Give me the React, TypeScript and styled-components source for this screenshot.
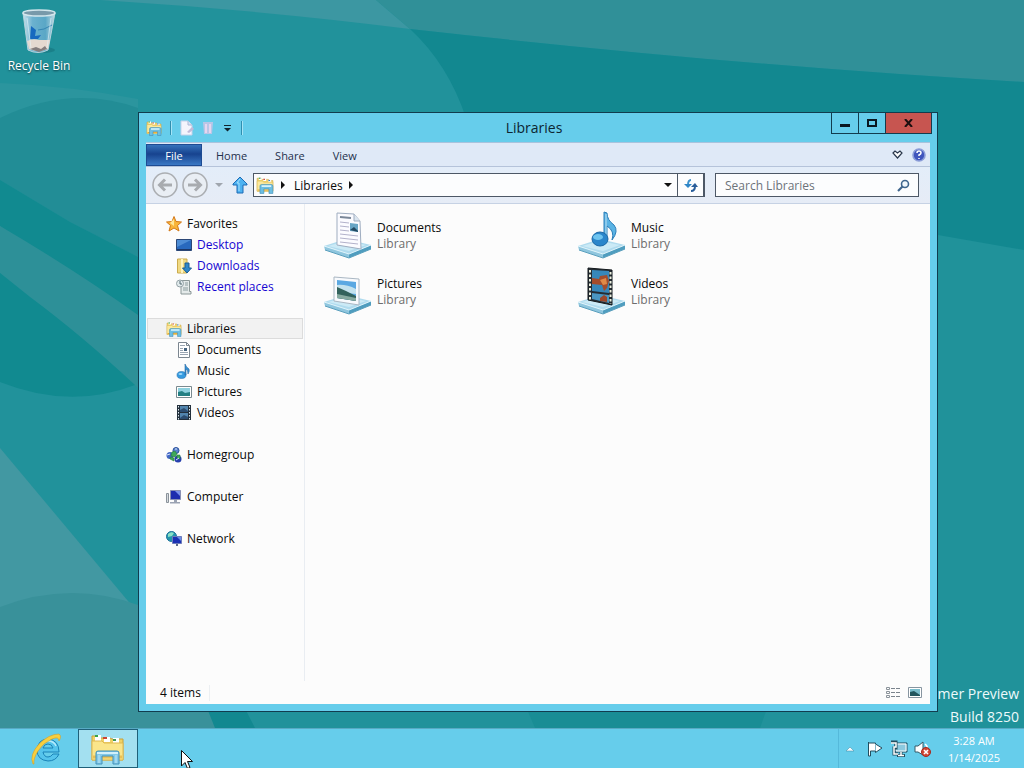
import { ReactNode, useState } from "react";
import styled, { createGlobalStyle } from "styled-components";

const GlobalStyle = createGlobalStyle`
  * {
    box-sizing: border-box;
  }
  body {
    margin: 0;
    font-family: "Segoe UI", "Open Sans", "Noto Sans", sans-serif;
    font-size: 12px;
    color: #0a0a0a;
  }
  button, input {
    font: inherit;
    color: inherit;
    padding: 0;
    border: none;
    background: none;
  }
  h1, p, ul {
    margin: 0;
    padding: 0;
  }
  svg {
    display: block;
    flex: none;
  }
`;

const Screen = styled.div`
  display: flex;
  flex-direction: column;
  min-height: 100vh;
  overflow: hidden;
`;

const Desktop = styled.main`
  position: relative;
  flex: 1;
  background: #21929b;
`;

const WallpaperSvg = styled.svg`
  position: absolute;
  inset: 0;
  width: 100%;
  height: 100%;
`;

const DesktopIcon = styled.button`
  position: absolute;
  top: 8px;
  left: 0;
  width: 78px;
  display: flex;
  flex-direction: column;
  align-items: center;
  gap: 2px;
  color: #fff;
  line-height: 16px;
  text-shadow: 0 1px 2px rgba(0, 40, 50, 0.8);
`;

const Watermark = styled.p`
  position: absolute;
  right: 5px;
  bottom: 0;
  color: #eefafc;
  font-size: 14px;
  line-height: 23px;
  text-align: right;
`;

const Window = styled.section`
  position: absolute;
  top: 112px;
  right: 86px;
  bottom: 16px;
  left: 138px;
  display: flex;
  flex-direction: column;
  padding: 0 7px 7px;
  border: 1px solid #123c4e;
  background: #66cdeb;
`;

const TitleBar = styled.header`
  display: flex;
  height: 29px;
  flex: none;
`;

const QuickAccess = styled.div`
  display: flex;
  align-items: center;
  gap: 5px;
`;

const Divider = styled.span`
  width: 1px;
  height: 14px;
  margin: 0 3px;
  background: #2f8fb0;
  box-shadow: 1px 0 #a5e4f6;
`;

const Title = styled.h1`
  flex: 1;
  padding-right: 8px;
  font-size: 14px;
  font-weight: 400;
  line-height: 30px;
  text-align: center;
  color: #0c2531;
`;

const WindowControls = styled.div`
  display: flex;
  height: 21px;
  margin-right: -2px;
  border: 1px solid #123c4e;
  border-top: none;
`;

const ControlButton = styled.button`
  display: grid;
  place-items: center;
  width: 27px;
  border-right: 1px solid #123c4e;
`;

const CloseButton = styled(ControlButton)`
  width: 45px;
  border-right: none;
  background: #c75550;
`;

const Ribbon = styled.nav`
  display: flex;
  align-items: center;
  height: 25px;
  flex: none;
  padding: 1px 4px 0 0;
  border-top: 1px solid #a9c3dd;
  border-bottom: 1px solid #b5c3da;
  background: #dfe9f7;
`;

const Tab = styled.button<{ $active?: boolean }>`
  align-self: stretch;
  padding: 0 14px;
  min-width: ${({ $active }) => ($active ? "56px" : "0")};
  font-size: 11px;
  color: ${({ $active }) => ($active ? "#fff" : "#23304c")};
  background: ${({ $active }) =>
    $active ? "linear-gradient(#3572bb, #17438f 45%, #3a78c4)" : "none"};
  border: ${({ $active }) => ($active ? "1px solid #1d4b93" : "none")};
`;

const RibbonActions = styled.div`
  display: flex;
  align-items: center;
  gap: 8px;
  margin-left: auto;
`;

const AddressRow = styled.div`
  display: flex;
  align-items: center;
  height: 37px;
  flex: none;
  padding: 0 11px 0 6px;
  border-bottom: 1px solid #c6d2e4;
  background: linear-gradient(#e3edf9, #e6ecf6);
`;

const HistoryButtons = styled.div`
  display: flex;
  align-items: center;
  gap: 4px;
  margin-right: 5px;
`;

const RecentButton = styled.button`
  padding: 0 4px 0 3px;
`;

const AddressBar = styled.div`
  display: flex;
  align-items: center;
  flex: 1;
  height: 24px;
  border: 1px solid #4d5866;
  background: #fcfdfe;
`;

const LocationIcon = styled.span`
  padding: 0 5px 0 2px;
`;

const Crumb = styled.button`
  padding: 0 4px 0 7px;
`;

const DropButton = styled.button`
  margin-left: auto;
  padding: 0 5px;
`;

const RefreshButton = styled.button`
  display: grid;
  place-items: center;
  width: 27px;
  height: 22px;
  border: 1px solid #4d5866;
  border-width: 0 1px;
`;

const SearchBox = styled.label`
  display: flex;
  align-items: center;
  width: 204px;
  height: 24px;
  margin-left: 10px;
  padding: 0 8px 0 9px;
  border: 1px solid #4d5866;
  background: #fcfdfe;
`;

const SearchInput = styled.input`
  flex: 1;
  min-width: 0;
  outline: none;

  &::placeholder {
    color: #6d737a;
    opacity: 1;
  }
`;

const Body = styled.div`
  display: flex;
  flex: 1;
  min-height: 0;
  background: #fcfcfc;
`;

const Sidebar = styled.nav`
  width: 159px;
  flex: none;
  display: flex;
  flex-direction: column;
  gap: 21px;
  padding: 9px 1px 0;
  border-right: 1px solid #e9edf2;
`;

const NavGroup = styled.ul`
  list-style: none;
`;

const NavLink = styled.a<{ $child?: boolean; $selected?: boolean }>`
  display: flex;
  align-items: center;
  gap: 5px;
  height: 21px;
  padding-left: ${({ $child }) => ($child ? "28px" : "18px")};
  border: 1px solid ${({ $selected }) => ($selected ? "#dcdcdc" : "transparent")};
  background: ${({ $selected }) => ($selected ? "#f2f2f2" : "none")};
  color: inherit;
  text-decoration: none;
`;

const FavoriteLink = styled(NavLink)`
  color: #1606d2;
`;

const LibraryGrid = styled.div`
  flex: 1;
  display: grid;
  grid-template-columns: repeat(auto-fill, 254px);
  grid-auto-rows: 56px;
  align-content: start;
  padding: 4px 0 0 19px;
`;

const LibraryItem = styled.button`
  display: flex;
  align-items: center;
  gap: 5px;
  text-align: left;
  line-height: 16px;
`;

const Kind = styled.span`
  display: block;
  color: #6d6d6d;
`;

const StatusBar = styled.footer`
  display: flex;
  align-items: center;
  gap: 6px;
  height: 23px;
  flex: none;
  padding: 0 7px 0 14px;
  background: #fcfcfc;
`;

const ItemCount = styled.span`
  margin-right: auto;
  padding-right: 8px;
  border-right: 1px solid #eceff2;
  line-height: 16px;
`;

const Taskbar = styled.footer`
  display: flex;
  align-items: stretch;
  height: 40px;
  flex: none;
  padding-left: 16px;
  border-top: 1px solid #58aac4;
  background: #66cdeb;
`;

const TaskButton = styled.button<{ $active?: boolean }>`
  display: grid;
  place-items: center;
  width: ${({ $active }) => ($active ? "60px" : "62px")};
  border: ${({ $active }) => ($active ? "1px solid #1f6079" : "none")};
  background: ${({ $active }) => ($active ? "#a3e0f0" : "none")};
`;

const Tray = styled.div`
  display: flex;
  align-items: center;
  gap: 6px;
  margin-left: auto;
  padding: 0 22px 0 7px;
  border-left: 1px solid #55b9da;
`;

const TrayArrow = styled.button`
  padding-right: 6px;
`;

const Clock = styled.time`
  width: 56px;
  margin-left: 8px;
  color: #fff;
  font-size: 11px;
  line-height: 17px;
  text-align: center;
`;

const Pointer = styled.svg`
  position: fixed;
  left: 181px;
  top: 750px;
  pointer-events: none;
`;

const Wallpaper = () => (
  <WallpaperSvg viewBox="0 0 1024 728" preserveAspectRatio="none" aria-hidden="true">
    <path d="M0 83Q70 86 138 99V120H0z" fill="#2b959e" />
    <path d="M100 0Q260 10 410 29L376 0z" fill="#3c97a2" />
    <path d="M376 0L410 29Q740 66 1024 82V0z" fill="#309098" />
    <path d="M410 29Q448 64 466 118L600 300L1024 252V82Q740 66 410 29z" fill="#128890" />
    <path d="M938 235L1024 250V728H800V235z" fill="#20929a" />
    <path d="M0 118Q70 84 138 108V257L70 222L0 180z" fill="#228d96" />
    <path d="M0 180L70 222L138 257V320L0 226z" fill="#118a90" />
    <path d="M0 226Q75 270 138 315V388Q80 335 30 297L0 273z" fill="#2d9098" />
    <path d="M0 273L30 297Q80 334 135 385Q70 410 0 382z" fill="#118a90" />
    <path d="M0 448L138 613V640H0z" fill="#4298a2" />
    <path d="M0 607Q70 580 138 605Q190 640 222 728H0z" fill="#39919a" />
    <path d="M138 616Q190 660 215 728H255L138 500z" fill="#128890" />
    <path d="M523 700H770L760 728H535z" fill="#198d95" />
  </WallpaperSvg>
);

const RecycleBinIcon = () => (
  <svg width="40" height="48" viewBox="0 0 40 48">
    <defs>
      <linearGradient id="bin" x1="0" x2="1">
        <stop offset="0" stopColor="#c6e1ec" />
        <stop offset="0.3" stopColor="#6bb1cf" />
        <stop offset="0.7" stopColor="#5aa7c6" />
        <stop offset="1" stopColor="#c3dce4" />
      </linearGradient>
    </defs>
    <ellipse cx="24" cy="42" rx="12" ry="3" fill="#146d78" opacity="0.5" />
    <path d="M4 5L9 42Q19 47 29 42L36 5z" fill="url(#bin)" stroke="#b4d3dd" />
    <path d="M8 33Q14 30 20 32L31 32L29 41Q19 45 10 41z" fill="#e5d9d0" />
    <path d="M11 41L17 39L22 41L26 38L28 41L20 44z" fill="#857d7d" />
    <path d="M12 18L17 22L16 28L22 27L19 31H11z" fill="#1769bf" />
    <path d="M19 22L25 21L33 17" stroke="#3485b4" fill="none" />
    <ellipse cx="20" cy="5" rx="16" ry="3" fill="#7899aa" stroke="#d4e6ec" strokeWidth="1.5" />
    <path d="M8 10L12 40M32 10L28 40" stroke="#e6f5fb" opacity="0.6" />
  </svg>
);

const LibrariesIcon = ({ size = 16 }: { size?: number }) => (
  <svg width={size} height={size} viewBox="0 0 32 32">
    <path d="M2 4H9L11 6H22L24 8H30V27H2z" fill="#f1d36e" stroke="#cba744" />
    <path d="M5 3H10V7H5zM13 5H18V9H13zM22 7H27V11H22z" fill="#fff" />
    <path d="M5 3H8V5H5z" fill="#38a34b" />
    <path d="M13 5H16V7H13z" fill="#d4503f" />
    <path d="M22 7H25V9H22z" fill="#387fca" />
    <path d="M2 9H11L14 11H30V27H2z" fill="#fbe99d" stroke="#dcb954" />
    <path d="M3 25H29" stroke="#e8ad3a" strokeWidth="2" />
    <path d="M7 18Q7 15 10 15H27Q30 15 30 18V31H23V23H14V31H7z" fill="#6cbfe3" stroke="#3989b5" />
    <path d="M10 18H27" stroke="#daf4fc" strokeWidth="3" />
  </svg>
);

const NewPageIcon = () => (
  <svg width="16" height="16" viewBox="0 0 16 16">
    <path d="M2 1H9L13 5V15H2z" fill="#f4f4fc" stroke="#c5d2ea" />
    <path d="M9 1V5H13" fill="#dae2f4" stroke="#aab8d6" />
    <path d="M8 12L13 7L15 9L10 13z" fill="#c1bad9" />
  </svg>
);

const DeleteIcon = () => (
  <svg width="16" height="16" viewBox="0 0 16 16">
    <path d="M3 2H13L12 14H4z" fill="#d6c3e6" opacity="0.75" />
    <path d="M6 4V13M10 4V13" stroke="#e6d6ef" strokeWidth="2" />
  </svg>
);

const CustomizeIcon = () => (
  <svg width="12" height="8" viewBox="0 0 12 8">
    <path d="M3 1.5H10" stroke="#10242e" />
    <path d="M3 4H10L6.500 7.500z" fill="#10242e" />
  </svg>
);

const Triangle = ({ dir, color = "#111" }: { dir: "right" | "down"; color?: string }) => (
  <svg width="8" height="8" viewBox="0 0 8 8">
    <path d={dir === "right" ? "M2 0L6 4L2 8z" : "M0 2H8L4 6z"} fill={color} />
  </svg>
);

const HistoryIcon = ({ forward }: { forward?: boolean }) => (
  <svg width="26" height="26" viewBox="0 0 26 26">
    <circle cx="13" cy="13" r="12" fill="#e9eef4" stroke="#abaeb2" strokeWidth="1.600" />
    <path
      d={forward ? "M6 13H18M13 7.500L18.500 13L13 18.500" : "M20 13H8M13 7.500L7.500 13L13 18.500"}
      fill="none"
      stroke="#a8abaf"
      strokeWidth="3"
    />
  </svg>
);

const UpIcon = () => (
  <svg width="16" height="18" viewBox="0 0 16 18">
    <path d="M8 1L15 8V9H11V17H5V9H1V8z" fill="#4db2f1" stroke="#1d6bb5" />
    <path d="M8 3L5 7H7V15" fill="none" stroke="#a8e1fc" />
  </svg>
);

const RefreshIcon = () => (
  <svg width="16" height="16" viewBox="0 0 16 16">
    <path d="M8 3Q5 3 5 8" fill="none" stroke="#3c91cc" strokeWidth="2" />
    <path d="M1 7H9L5 11z" fill="#2e86c8" />
    <path d="M8 14Q12 14 12 9" fill="none" stroke="#285d9a" strokeWidth="2" />
    <path d="M8 10H15L12 6z" fill="#285d9a" />
  </svg>
);

const SearchIcon = () => (
  <svg width="13" height="13" viewBox="0 0 13 13">
    <circle cx="8" cy="5" r="3.500" fill="#f0f7fc" stroke="#3e658d" strokeWidth="1.600" />
    <path d="M5.500 7.500L1 12" stroke="#3e658d" strokeWidth="2.200" />
  </svg>
);

const ExpandIcon = () => (
  <svg width="12" height="10" viewBox="0 0 12 10">
    <path d="M1 3L3 1L5.500 3L8 1L10 3L5.500 8z" fill="#fff" stroke="#29374c" strokeWidth="1.200" />
  </svg>
);

const HelpIcon = () => (
  <svg width="14" height="14" viewBox="0 0 14 14">
    <circle cx="7" cy="7" r="6" fill="#3f55bd" stroke="#8b9dd8" strokeWidth="1.600" />
    <path d="M5 5Q5 3 7 3Q9 3 9 5Q9 6 7 7V8M7 10V11" fill="none" stroke="#fff" strokeWidth="1.500" />
  </svg>
);

const StarIcon = () => (
  <svg width="16" height="16" viewBox="0 0 16 16">
    <path d="M8 .500L10 5.500L15.500 6L11.500 9.500L13 15L8 12L3 15L4.500 9.500L.500 6L6 5.500z" fill="#f9b53a" stroke="#d27819" />
    <path d="M8 3V10L4 7z" fill="#fee698" />
  </svg>
);

const DesktopSmallIcon = () => (
  <svg width="16" height="16" viewBox="0 0 16 16">
    <path d="M.500 2.500H15.500V13.500H.500z" fill="#2869be" stroke="#2b4776" />
    <path d="M1 3H15L1 10z" fill="#5e9cde" opacity="0.7" />
    <path d="M1 12.500H15" stroke="#1c3767" />
  </svg>
);

const DownloadsIcon = () => (
  <svg width="16" height="16" viewBox="0 0 16 16">
    <path d="M1.500 1H11V15H1.500z" fill="#f0d983" stroke="#cbab4d" />
    <path d="M6 1V15" stroke="#fff4be" strokeWidth="2" />
    <path d="M9 5H13V10H15.500L11 15L6.500 10H9z" fill="#2f87c9" stroke="#1a5c94" />
  </svg>
);

const RecentIcon = () => (
  <svg width="16" height="16" viewBox="0 0 16 16">
    <path d="M4.500 1.500H13.500V12.500H15V15H5V6z" fill="#e4eaea" stroke="#8a9797" />
    <path d="M7 9H12M7 11H12M9 4H12M9 6H12" stroke="#8a9c9e" />
    <circle cx="4" cy="4.500" r="3.500" fill="#e1eaec" stroke="#93a1a6" />
    <path d="M4 2V5H6" fill="none" stroke="#506970" />
  </svg>
);

const DocumentSmallIcon = () => (
  <svg width="16" height="16" viewBox="0 0 16 16">
    <path d="M2.500 .500H10.500L13.500 3.500V15.500H2.500z" fill="#fff" stroke="#7c8690" />
    <path d="M4 3.500H9M4 6.500H7M4 8.500H7M4 10.500H12M4 12.500H12" stroke="#9aa5b2" />
    <path d="M8 6H11V9H8z" fill="#46637f" />
    <path d="M10.500 .500V3.500H13.500" fill="none" stroke="#7c8690" />
  </svg>
);

const MusicSmallIcon = () => (
  <svg width="16" height="16" viewBox="0 0 16 16">
    <ellipse cx="5.500" cy="12" rx="4.500" ry="3.500" fill="#359be0" stroke="#2872b0" strokeWidth=".6" />
    <path d="M9 12V1Q10 4 13 6Q14 8 12 11Q12 7 10 6V12z" fill="#358fd2" stroke="#2568a2" strokeWidth=".6" />
    <ellipse cx="4.500" cy="11" rx="2" ry="1" fill="#9ed8fa" />
  </svg>
);

const PictureSmallIcon = () => (
  <svg width="16" height="16" viewBox="0 0 16 16">
    <path d="M.500 2.500H15.500V13.500H.500z" fill="#fff" stroke="#7a8a90" />
    <path d="M2 4H14V12H2z" fill="#8ed1df" />
    <path d="M2 8L6 7L9 9L14 8V12H2z" fill="#237f83" />
  </svg>
);

const VideoSmallIcon = () => (
  <svg width="16" height="16" viewBox="0 0 16 16">
    <path d="M1 0H15V15H1z" fill="#23303c" />
    <path d="M4 1H12V7H4zM4 8H12V14H4z" fill="#5285ae" />
    <path d="M4 5L8 3L12 6V7H4zM4 13L8 10L12 12V14H4z" fill="#2c4d70" />
    <path d="M2.500 1V15M13.500 1V15" stroke="#dce8ef" strokeDasharray="1.500 1.500" />
  </svg>
);

const HomegroupIcon = () => (
  <svg width="16" height="16" viewBox="0 0 16 16">
    <circle cx="10" cy="3.500" r="3" fill="#5a83cc" stroke="#2b519c" />
    <circle cx="4" cy="8.500" r="3.500" fill="#4266c5" />
    <circle cx="12" cy="12" r="3.500" fill="#263fae" />
    <path d="M6 5L9 4L11 7L9 10L5 9zM4 10L8 11V14L4 12zM11 8L14 8V12L11 11z" fill="#3fa957" stroke="#277c3f" strokeWidth=".6" />
    <path d="M1 8L4 7M10 13L13 11M9 2L11 2" stroke="#d8e7fa" />
  </svg>
);

const ComputerIcon = () => (
  <svg width="16" height="16" viewBox="0 0 16 16">
    <path d="M.500 4.500H2.500V13.500H.500z" fill="#d7dce0" stroke="#8a929a" />
    <path d="M4.500 1.500H14.500V10.500H4.500z" fill="#1e2dae" stroke="#8990b3" />
    <path d="M9 2H14V7z" fill="#7a91ea" />
    <path d="M8 11H11V13H8zM4 13H14V14.500H4z" fill="#9ba3b3" />
  </svg>
);

const NetworkIcon = () => (
  <svg width="16" height="16" viewBox="0 0 16 16">
    <circle cx="5.500" cy="5.500" r="5" fill="#2396ac" stroke="#1b6f99" />
    <path d="M2 3Q5 0 8 2L6 5L2 6z" fill="#8ae0c6" />
    <path d="M6.500 5.500H15.500V12.500H6.500z" fill="#1b31b4" stroke="#6e7cba" />
    <path d="M11 6H15V10z" fill="#6a8de8" />
    <path d="M10 13H12V15H10z" fill="#5b6989" />
  </svg>
);

const Platform = () => (
  <>
    <path d="M0 35L25 42V47L1 39z" fill="#8fc6de" />
    <path d="M25 42L47 34V38L25 47z" fill="#4f9dbf" />
    <path d="M0 35L22 28L47 34L25 43z" fill="#b0dbee" />
    <path d="M4 35L22 30L42 34L25 40z" fill="#cbeaf6" />
    <path d="M0 35L25 43L47 34" fill="none" stroke="#e0f4fb" />
    <path d="M1 39L25 47L47 38" fill="none" stroke="#5a9fbd" />
  </>
);

const LargeIcon = ({ children }: { children: ReactNode }) => (
  <svg width="48" height="50" viewBox="0 0 48 50">
    <Platform />
    {children}
  </svg>
);

const DocumentArt = () => (
  <LargeIcon>
    <path d="M13 2L30 3L36 10L37 38L13 34z" fill="#fbfbff" stroke="#9fadc0" />
    <path d="M30 3V10H36" fill="#dae5ef" stroke="#9fadc0" />
    <path d="M16 11L25 12M16 15L25 16M16 19L25 20M16 23L34 25M16 27L34 29M16 31L34 33" stroke="#b3b2cb" />
    <path d="M16 6L27 7" stroke="#7a8798" strokeWidth="2" />
    <path d="M26 12L34 13V21L26 20z" fill="#67a5c5" />
    <path d="M26 19L30 16L34 20V21z" fill="#234961" />
  </LargeIcon>
);

const PictureArt = () => (
  <LargeIcon>
    <path d="M10 10L35 12V38L10 34z" fill="#f8fafd" stroke="#aab7c3" />
    <path d="M13 13L32 15V34L13 31z" fill="#5ba8e2" />
    <path d="M13 18Q22 17 32 22V27L13 25z" fill="#c3e2ee" />
    <path d="M13 20L22 24L32 29V34L13 31z" fill="#32625c" />
    <path d="M13 27L32 31V34L13 31z" fill="#86aaa0" />
  </LargeIcon>
);

const MusicArt = () => (
  <LargeIcon>
    <path d="M26 30V1L29 2Q29 9 36 14Q41 20 34 29Q37 20 29 15V30z" fill="#5ab3e4" stroke="#2c7eb8" />
    <path d="M28 3V28" stroke="#badff2" />
    <ellipse cx="22" cy="28" rx="8" ry="7" fill="#2a86cb" stroke="#1b68a6" />
    <ellipse cx="20" cy="26" rx="5" ry="3" fill="#6ec4ef" />
  </LargeIcon>
);

const VideoArt = () => (
  <LargeIcon>
    <path d="M10 1L34 3V38L10 33z" fill="#252d34" stroke="#13181c" />
    <path d="M14 3L31 4V26L14 24z" fill="#3687ba" />
    <path d="M14 26L31 28V36L14 32z" fill="#4a96c1" />
    <path d="M14 11L21 12L22 9L29 8L31 14L29 21L26 24L24 18L14 17z" fill="#a34c2c" />
    <path d="M22 13L28 11L29 17L25 18z" fill="#e08a48" />
    <path d="M22 31L26 28L29 30V35L22 34z" fill="#9a472b" />
    <path d="M12 3V33M32.500 5V37" stroke="#eef1e0" strokeWidth="2" strokeDasharray="2.500 2" />
  </LargeIcon>
);

const DetailsViewIcon = () => (
  <svg width="16" height="13" viewBox="0 0 16 13">
    <path d="M1.500 1.500H4.500V3.500H1.500zM1.500 5.500H4.500V7.500H1.500zM1.500 9.500H4.500V11.500H1.500z" fill="none" stroke="#8b939a" />
    <path d="M6 2.500H15M6 6.500H15M6 10.500H15" stroke="#7a838c" strokeDasharray="4 1" />
  </svg>
);

const LargeViewIcon = () => (
  <svg width="16" height="13" viewBox="0 0 16 13">
    <path d="M1.500 1.500H14.500V11.500H1.500z" fill="#fff" stroke="#8795a0" />
    <path d="M3 3H13V10H3z" fill="#78bccb" />
    <path d="M3 6L7 5L13 9V10H3z" fill="#22565e" />
  </svg>
);

const ExplorerBrowserIcon = () => (
  <svg width="34" height="34" viewBox="0 0 34 34">
    <path d="M29 22Q26 29 18 29Q7 28 7 18Q8 7 18 7Q29 8 29 20H13Q14 25 18 25Q21 25 23 22zM13 16H23Q22 12 18 12Q14 12 13 16z" fill="#55c4ec" fillRule="evenodd" stroke="#1a83b8" />
    <path d="M10 14Q13 9 18 9Q24 9 26 14" fill="none" stroke="#b5eafb" strokeWidth="1.500" />
    <path d="M3 32Q-1 23 9 12Q19 2 29 2Q32 4 29 9Q29 4 22 7Q13 11 8 19Q3 27 4 32z" fill="#f8cf3f" stroke="#d8a023" strokeWidth=".6" />
  </svg>
);

const TaskExplorerIcon = () => (
  <svg width="34" height="32" viewBox="0 0 34 32">
    <path d="M1 3H8L10 5H19L21 6H32V27H1z" fill="#f0d265" stroke="#c8a03c" />
    <path d="M4 2H10V8H4zM13 4H19V9H13zM22 5H28V10H22z" fill="#fff" />
    <path d="M4 2H7V4H4z" fill="#36a348" />
    <path d="M12 4H16V6H12z" fill="#cc4535" />
    <path d="M22 6H25V8H22z" fill="#3f9652" />
    <path d="M1 8H11L13 10H32V27H1z" fill="#fae58a" stroke="#dfb850" />
    <path d="M2 24H31" stroke="#eac055" strokeWidth="3" />
    <path d="M5 20Q5 18 7 18H26Q28 18 28 20V31H22V23H11V31H5z" fill="#83c9e8" stroke="#4390b8" />
    <path d="M6 20H27" stroke="#d2f0fa" strokeWidth="2" />
    <path d="M8 22V30M25 22V30" stroke="#c0e8f6" strokeWidth="1" />
  </svg>
);

const TrayArrowIcon = () => (
  <svg width="8" height="6" viewBox="0 0 8 6">
    <path d="M0 5L4 1L8 5z" fill="#f5fcfe" stroke="#3c87a0" strokeWidth=".5" />
  </svg>
);

const FlagIcon = () => (
  <svg width="18" height="18" viewBox="0 0 18 18">
    <path d="M2.500 2V16H4.500V11H9.500V12.500L16 8L9.500 4V3H2.500z" fill="#fff" stroke="#234d5e" />
    <path d="M9.500 4V11" stroke="#7fb6c8" />
  </svg>
);

const TrayNetworkIcon = () => (
  <svg width="18" height="18" viewBox="0 0 18 18">
    <path d="M5 3H17V12H5z" fill="#8cc9df" stroke="#234d5e" />
    <path d="M6 4H16V11H6z" fill="none" stroke="#fff" />
    <path d="M11 12V15M7 15.500H15" stroke="#234d5e" strokeWidth="3" />
    <path d="M11 12V15M8 15.500H14" stroke="#fff" strokeWidth="1.500" />
    <path d="M1 2H6V8H4V14H8" fill="none" stroke="#234d5e" strokeWidth="3" />
    <path d="M1 3H6V7H4V14H8" fill="none" stroke="#fff" strokeWidth="1.500" />
  </svg>
);

const TraySoundIcon = () => (
  <svg width="18" height="18" viewBox="0 0 18 18">
    <path d="M1 6H4L9 2V15L4 12H1z" fill="#fff" stroke="#355a68" />
    <path d="M11 4Q14 6 13 9" fill="none" stroke="#fff" strokeWidth="1.500" />
    <circle cx="12" cy="12" r="4.500" fill="#d24736" stroke="#a4281e" />
    <path d="M10 10L14 14M14 10L10 14" stroke="#fff" strokeWidth="1.600" />
  </svg>
);

const libraryLinks = [
  { name: "Documents", icon: <DocumentSmallIcon />, art: <DocumentArt /> },
  { name: "Music", icon: <MusicSmallIcon />, art: <MusicArt /> },
  { name: "Pictures", icon: <PictureSmallIcon />, art: <PictureArt /> },
  { name: "Videos", icon: <VideoSmallIcon />, art: <VideoArt /> },
];

const favorites = [
  { name: "Desktop", icon: <DesktopSmallIcon /> },
  { name: "Downloads", icon: <DownloadsIcon /> },
  { name: "Recent places", icon: <RecentIcon /> },
];

const places = [
  { name: "Homegroup", icon: <HomegroupIcon /> },
  { name: "Computer", icon: <ComputerIcon /> },
  { name: "Network", icon: <NetworkIcon /> },
];

function ExplorerWindow() {
  const [query, setQuery] = useState("");

  return (
    <Window>
      <TitleBar>
        <QuickAccess>
          <LibrariesIcon />
          <Divider />
          <button aria-label="Properties"><NewPageIcon /></button>
          <button aria-label="Delete"><DeleteIcon /></button>
          <button aria-label="Customize toolbar"><CustomizeIcon /></button>
          <Divider />
        </QuickAccess>
        <Title>Libraries</Title>
        <WindowControls>
          <ControlButton aria-label="Minimize">
            <svg width="11" height="10" viewBox="0 0 11 10">
              <path d="M0 6H10V9H0z" fill="#0a1720" />
            </svg>
          </ControlButton>
          <ControlButton aria-label="Maximize">
            <svg width="10" height="8" viewBox="0 0 10 8">
              <path d="M1 1H9V7H1z" fill="none" stroke="#0a1720" strokeWidth="2" />
            </svg>
          </ControlButton>
          <CloseButton aria-label="Close">
            <svg width="9" height="8" viewBox="0 0 9 8">
              <path d="M1 0L8 8M8 0L1 8" stroke="#1c0f10" strokeWidth="2" />
            </svg>
          </CloseButton>
        </WindowControls>
      </TitleBar>
      <Ribbon>
        <Tab $active>File</Tab>
        <Tab>Home</Tab>
        <Tab>Share</Tab>
        <Tab>View</Tab>
        <RibbonActions>
          <button aria-label="Expand the ribbon"><ExpandIcon /></button>
          <button aria-label="Help"><HelpIcon /></button>
        </RibbonActions>
      </Ribbon>
      <AddressRow>
        <HistoryButtons>
          <button aria-label="Back"><HistoryIcon /></button>
          <button aria-label="Forward"><HistoryIcon forward /></button>
          <RecentButton aria-label="Recent locations">
            <Triangle dir="down" color="#a0a6ae" />
          </RecentButton>
        </HistoryButtons>
        <HistoryButtons>
          <button aria-label="Up"><UpIcon /></button>
        </HistoryButtons>
        <AddressBar>
          <LocationIcon><LibrariesIcon size={18} /></LocationIcon>
          <Triangle dir="right" />
          <Crumb>Libraries</Crumb>
          <Triangle dir="right" />
          <DropButton aria-label="Previous locations"><Triangle dir="down" /></DropButton>
          <RefreshButton aria-label="Refresh"><RefreshIcon /></RefreshButton>
        </AddressBar>
        <SearchBox>
          <SearchInput
            aria-label="Search Libraries"
            placeholder="Search Libraries"
            value={query}
            onChange={(event) => setQuery(event.target.value)}
          />
          <SearchIcon />
        </SearchBox>
      </AddressRow>
      <Body>
        <Sidebar>
          <NavGroup>
            <li><NavLink href="#favorites"><StarIcon />Favorites</NavLink></li>
            {favorites.map(({ name, icon }) => (
              <li key={name}><FavoriteLink $child href={`#${name}`}>{icon}{name}</FavoriteLink></li>
            ))}
          </NavGroup>
          <NavGroup>
            <li><NavLink $selected href="#libraries"><LibrariesIcon />Libraries</NavLink></li>
            {libraryLinks.map(({ name, icon }) => (
              <li key={name}><NavLink $child href={`#${name}`}>{icon}{name}</NavLink></li>
            ))}
          </NavGroup>
          {places.map(({ name, icon }) => (
            <NavGroup key={name}>
              <li><NavLink href={`#${name}`}>{icon}{name}</NavLink></li>
            </NavGroup>
          ))}
        </Sidebar>
        <LibraryGrid>
          {libraryLinks.map(({ name, art }) => (
            <LibraryItem key={name}>
              {art}
              <span>
                {name}
                <Kind>Library</Kind>
              </span>
            </LibraryItem>
          ))}
        </LibraryGrid>
      </Body>
      <StatusBar>
        <ItemCount>4 items</ItemCount>
        <button aria-label="Details view"><DetailsViewIcon /></button>
        <button aria-label="Large icons view"><LargeViewIcon /></button>
      </StatusBar>
    </Window>
  );
}

export default function App() {
  return (
    <>
      <GlobalStyle />
      <Screen>
        <Desktop>
          <Wallpaper />
          <DesktopIcon>
            <RecycleBinIcon />
            Recycle Bin
          </DesktopIcon>
          <Watermark>
            mer Preview
            <br />
            Build 8250
          </Watermark>
          <ExplorerWindow />
        </Desktop>
        <Taskbar>
          <TaskButton aria-label="Internet Explorer"><ExplorerBrowserIcon /></TaskButton>
          <TaskButton $active aria-label="File Explorer"><TaskExplorerIcon /></TaskButton>
          <Tray>
            <TrayArrow aria-label="Show hidden icons"><TrayArrowIcon /></TrayArrow>
            <button aria-label="Action Center"><FlagIcon /></button>
            <button aria-label="Network"><TrayNetworkIcon /></button>
            <button aria-label="Volume"><TraySoundIcon /></button>
            <Clock>
              3:28 AM
              <br />
              1/14/2025
            </Clock>
          </Tray>
        </Taskbar>
        <Pointer width="13" height="20" viewBox="0 0 13 20">
          <path d="M.500 .500V16L4 12.500L6.500 18.500L9 17.500L6.500 11.500H11.500z" fill="#fff" stroke="#111" />
        </Pointer>
      </Screen>
    </>
  );
}
